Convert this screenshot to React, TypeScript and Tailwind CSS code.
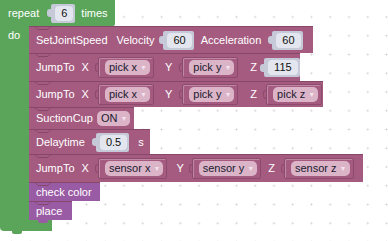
import React from "react";

function NumSocket({ value }: { value: string }) {
    return (
        <div className="flex items-center">
            <div className="h-[8px] w-[4px] rounded-l-[3px] bg-[#c5c9d8]" />
            <div className="flex h-[19px] items-center rounded-[2px] bg-[#c5c9d8] pl-[4px] pr-[2px]">
                <div className="flex h-[15px] items-center rounded-[4px] bg-[#e3e6ee] px-[6px] text-[#111]">
                    {value}
                </div>
            </div>
        </div>
    );
}

function Pill({ label }: { label: string }) {
    return (
        <div className="flex h-[15px] items-center rounded-[5px] bg-[#dbb4c8] pl-[4px] pr-[3px] text-[#1a1a2e]">
            <span>{label}</span>
            <span className="ml-[3px] text-[7px] text-[#f3e3eb]">▼</span>
        </div>
    );
}

function DropSocket({ label }: { label: string }) {
    return (
        <div className="flex items-center">
            <div className="h-[9px] w-[3px] rounded-l-[3px] border-y border-l border-[#8c4b6c]" />
            <div className="flex h-[21px] items-center rounded-[2px] border border-[#8c4b6c] pl-[6px] pr-[3px] shadow-[inset_1px_1px_0_#bf87a3]">
                <Pill label={label} />
            </div>
        </div>
    );
}

function Notch() {
    return (
        <svg className="absolute left-[6px] top-[-1px]" width="16" height="5" viewBox="0 0 16 5">
            <path d="M0 0.5 L3 3.5 H13 L16 0.5" fill="none" stroke="#874769" strokeWidth="1" />
        </svg>
    );
}

function Block({
    width,
    height,
    color = "bg-[#a55b80]",
    tab,
    children,
}: {
    width: string;
    height: string;
    color?: string;
    tab?: boolean;
    children: React.ReactNode;
}) {
    return (
        <div className={`relative flex items-center border-t border-[#874769] pl-[7px] text-white ${width} ${height} ${color}`}>
            <Notch />
            {children}
            {/* next-statement tab hanging under the last block */}
            {tab && <div className={`absolute left-[9px] top-full h-[3px] w-[10px] rounded-b-[2px] ${color}`} />}
        </div>
    );
}

function Grid() {
    return (
        <svg className="absolute inset-0" width="388" height="241">
            <defs>
                <pattern id="dots" x="2.125" y="7.625" width="18.75" height="18.75" patternUnits="userSpaceOnUse">
                    <path d="M8.375 9.375 H10.375 M9.375 8.375 V10.375" stroke="#d2d2d2" strokeWidth="1" />
                </pattern>
            </defs>
            <rect width="388" height="241" fill="url(#dots)" />
        </svg>
    );
}

export default function App() {
    return (
        <div className="relative h-[241px] w-[388px] overflow-hidden bg-white font-['Liberation_Sans',Arial,sans-serif] text-[11px] leading-none">
            <Grid />
            <div className="relative flex flex-col">
                <div className="flex h-[26px] w-[115px] items-center rounded-br-[2px] bg-[#5ba55b] pl-[8px] text-white">
                    <span>repeat</span>
                    <div className="ml-[8px]">
                        <NumSocket value="6" />
                    </div>
                    <span className="ml-[6px]">times</span>
                </div>

                <div className="flex">
                    <div className="w-[29px] bg-[#5ba55b] pl-[8px] pt-[4px] text-white">do</div>
                    <div className="relative z-10 flex flex-col">
                        <Block width="w-[284px]" height="h-[27px]">
                            <span>SetJointSpeed</span>
                            <span className="ml-[9px]">Velocity</span>
                            <div className="ml-[5px]"><NumSocket value="60" /></div>
                            <span className="ml-[7px]">Acceleration</span>
                            <div className="ml-[7px]"><NumSocket value="60" /></div>
                        </Block>

                        <Block width="w-[271px]" height="h-[28px]">
                            <span>JumpTo</span>
                            <span className="ml-[7px]">X</span>
                            <div className="ml-[6px]"><DropSocket label="pick x" /></div>
                            <span className="ml-[11px]">Y</span>
                            <div className="ml-[7px]"><DropSocket label="pick y" /></div>
                            <span className="ml-[12px]">Z</span>
                            <div className="ml-[3px]"><NumSocket value="115" /></div>
                        </Block>

                        <Block width="w-[294px]" height="h-[26px]">
                            <span>JumpTo</span>
                            <span className="ml-[7px]">X</span>
                            <div className="ml-[6px]"><DropSocket label="pick x" /></div>
                            <span className="ml-[11px]">Y</span>
                            <div className="ml-[7px]"><DropSocket label="pick y" /></div>
                            <span className="ml-[12px]">Z</span>
                            <div className="ml-[6px]"><DropSocket label="pick z" /></div>
                        </Block>

                        <Block width="w-[105px]" height="h-[22px]">
                            <span>SuctionCup</span>
                            <div className="ml-[4px]"><Pill label="ON" /></div>
                        </Block>

                        <Block width="w-[121px]" height="h-[25px]">
                            <span>Delaytime</span>
                            <div className="ml-[7px]"><NumSocket value="0.5" /></div>
                            <span className="ml-[9px]">s</span>
                        </Block>

                        <Block width="w-[334px]" height="h-[28px]">
                            <span>JumpTo</span>
                            <span className="ml-[7px]">X</span>
                            <div className="ml-[6px]"><DropSocket label="sensor x" /></div>
                            <span className="ml-[9px]">Y</span>
                            <div className="ml-[5px]"><DropSocket label="sensor y" /></div>
                            <span className="ml-[7px]">Z</span>
                            <div className="ml-[6px]"><DropSocket label="sensor z" /></div>
                        </Block>

                        <Block width="w-[71px]" height="h-[19px]" color="bg-[#9a5ba5]">
                            <span>check color</span>
                        </Block>

                        <Block width="w-[43px]" height="h-[19px]" color="bg-[#9a5ba5]" tab>
                            <span>place</span>
                        </Block>
                    </div>
                </div>

                <div className="relative h-[11px] w-[52px] rounded-bl-[4px] bg-[#5ba55b]">
                    <div className="absolute left-[12px] top-full h-[3px] w-[10px] rounded-b-[2px] bg-[#5ba55b]" />
                </div>
            </div>
        </div>
    );
}
